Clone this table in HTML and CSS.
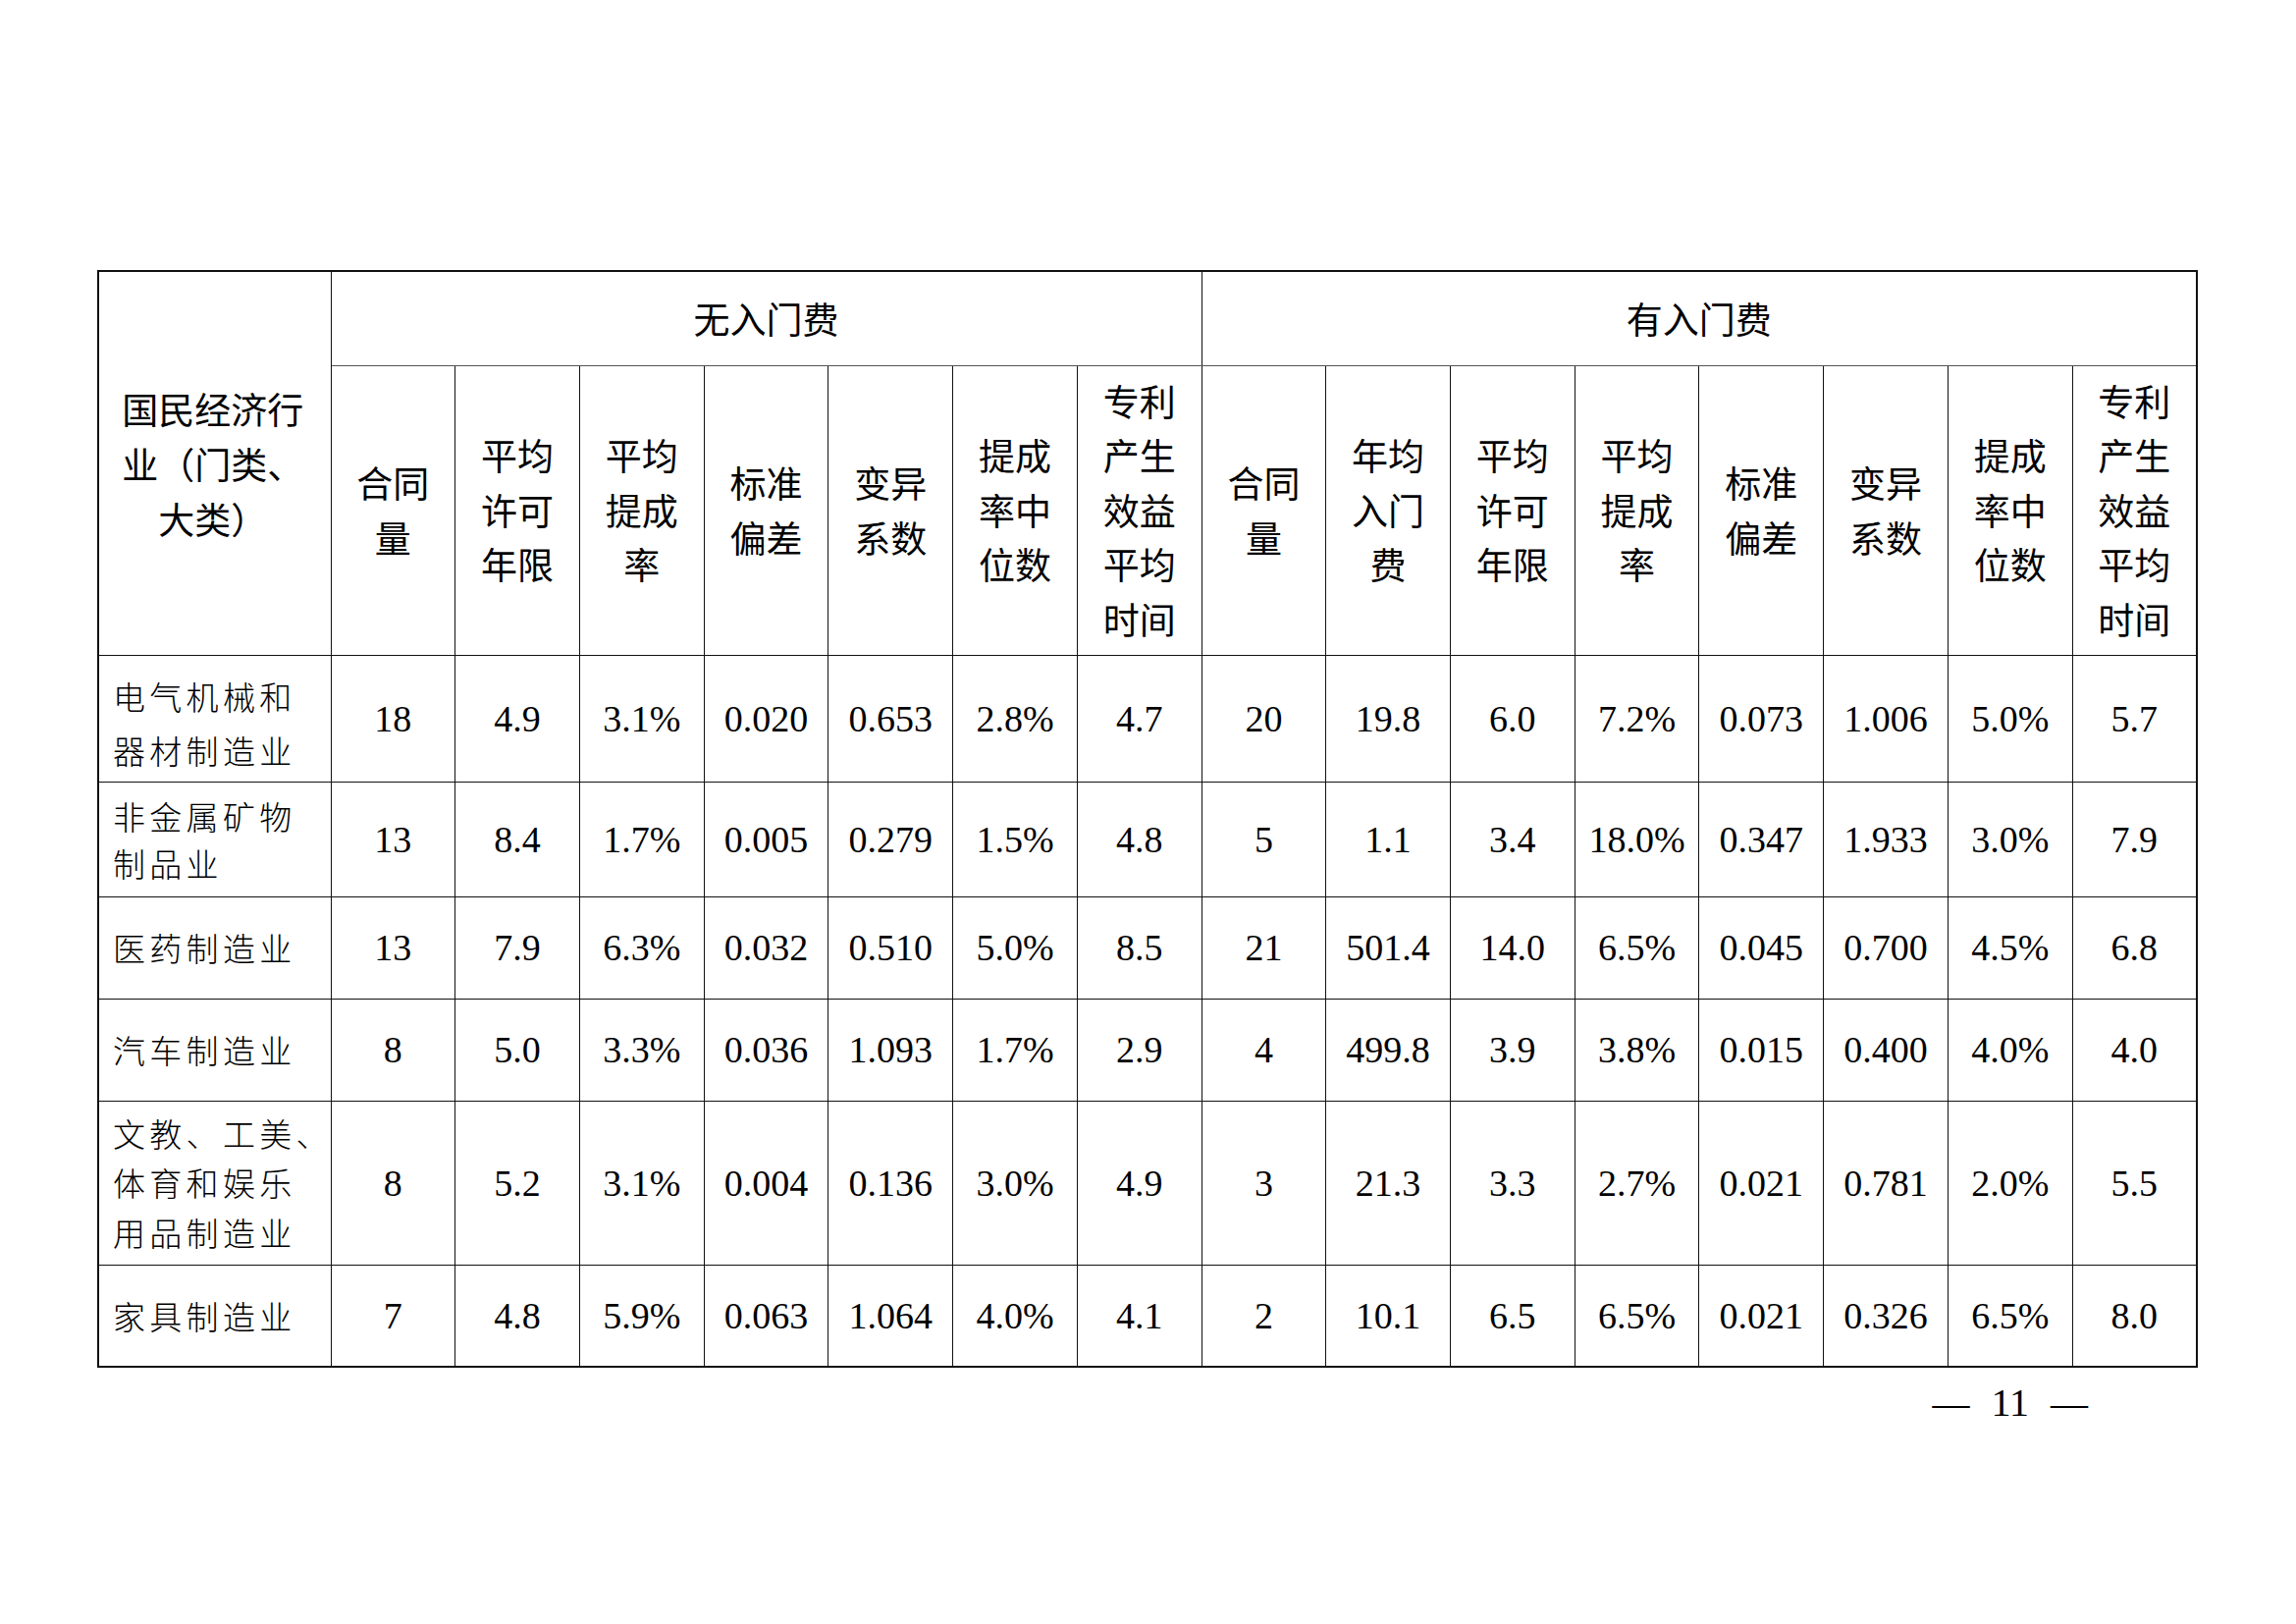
FILE: index.html
```html
<!DOCTYPE html>
<html lang="zh-CN">
<head>
<meta charset="utf-8">
<title>国民经济行业入门费统计</title>
<link rel="stylesheet" href="styles.css">
</head>
<body>
<div class="page">
  <table class="stats">
    <colgroup>
      <col class="col-name">
      <col><col><col><col><col><col><col>
      <col><col><col><col><col><col><col><col>
    </colgroup>
    <thead>
      <tr class="h-group">
        <th class="head-name" rowspan="2">国民经济行<br>业（门类、<br>大类）</th>
        <th class="group" colspan="7">无入门费</th>
        <th class="group" colspan="8">有入门费</th>
      </tr>
      <tr class="h-sub">
        <th>合同<br>量</th>
        <th>平均<br>许可<br>年限</th>
        <th>平均<br>提成<br>率</th>
        <th>标准<br>偏差</th>
        <th>变异<br>系数</th>
        <th>提成<br>率中<br>位数</th>
        <th>专利<br>产生<br>效益<br>平均<br>时间</th>
        <th>合同<br>量</th>
        <th>年均<br>入门<br>费</th>
        <th>平均<br>许可<br>年限</th>
        <th>平均<br>提成<br>率</th>
        <th>标准<br>偏差</th>
        <th>变异<br>系数</th>
        <th>提成<br>率中<br>位数</th>
        <th>专利<br>产生<br>效益<br>平均<br>时间</th>
      </tr>
    </thead>
    <tbody>
      <tr class="r1">
        <td class="name lh55">电气机械和<br>器材制造业</td>
        <td>18</td><td>4.9</td><td>3.1%</td><td>0.020</td><td>0.653</td><td>2.8%</td><td>4.7</td>
        <td>20</td><td>19.8</td><td>6.0</td><td>7.2%</td><td>0.073</td><td>1.006</td><td>5.0%</td><td>5.7</td>
      </tr>
      <tr class="r2">
        <td class="name lh48">非金属矿物<br>制品业</td>
        <td>13</td><td>8.4</td><td>1.7%</td><td>0.005</td><td>0.279</td><td>1.5%</td><td>4.8</td>
        <td>5</td><td>1.1</td><td>3.4</td><td>18.0%</td><td>0.347</td><td>1.933</td><td>3.0%</td><td>7.9</td>
      </tr>
      <tr class="r3">
        <td class="name">医药制造业</td>
        <td>13</td><td>7.9</td><td>6.3%</td><td>0.032</td><td>0.510</td><td>5.0%</td><td>8.5</td>
        <td>21</td><td>501.4</td><td>14.0</td><td>6.5%</td><td>0.045</td><td>0.700</td><td>4.5%</td><td>6.8</td>
      </tr>
      <tr class="r4">
        <td class="name">汽车制造业</td>
        <td>8</td><td>5.0</td><td>3.3%</td><td>0.036</td><td>1.093</td><td>1.7%</td><td>2.9</td>
        <td>4</td><td>499.8</td><td>3.9</td><td>3.8%</td><td>0.015</td><td>0.400</td><td>4.0%</td><td>4.0</td>
      </tr>
      <tr class="r5">
        <td class="name lh50">文教、工美、<br>体育和娱乐<br>用品制造业</td>
        <td>8</td><td>5.2</td><td>3.1%</td><td>0.004</td><td>0.136</td><td>3.0%</td><td>4.9</td>
        <td>3</td><td>21.3</td><td>3.3</td><td>2.7%</td><td>0.021</td><td>0.781</td><td>2.0%</td><td>5.5</td>
      </tr>
      <tr class="r6">
        <td class="name">家具制造业</td>
        <td>7</td><td>4.8</td><td>5.9%</td><td>0.063</td><td>1.064</td><td>4.0%</td><td>4.1</td>
        <td>2</td><td>10.1</td><td>6.5</td><td>6.5%</td><td>0.021</td><td>0.326</td><td>6.5%</td><td>8.0</td>
      </tr>
    </tbody>
  </table>
  <div class="folio">
    <span class="dash">—</span><span class="num">11</span><span class="dash">—</span>
  </div>
</div>
</body>
</html>
```

FILE: styles.css
```css
html, body {
  margin: 0;
  padding: 0;
  background: #ffffff;
}

body {
  color: #000000;
  font-family: "Liberation Serif", "Times New Roman", "Noto Sans CJK SC", serif;
}

.page {
  width: 2339px;
  height: 1654px;
  box-sizing: border-box;
  padding: 275px 0 0 99px;
}

.stats {
  width: 2140px;
  table-layout: fixed;
  border-collapse: collapse;
  border: 2px solid #111111;
}

.col-name {
  width: 237px;
}

.stats th,
.stats td {
  border: 1px solid #111111;
  padding: 0;
  text-align: center;
  vertical-align: middle;
}

.stats th {
  font-family: "Noto Sans CJK SC", "Noto Sans", sans-serif;
  font-weight: 400;
  font-size: 37px;
  line-height: 55.5px;
}

.stats .head-name {
  line-height: 56px;
  padding-right: 4px;
}

.h-group {
  height: 96px;
}

.h-group .group {
  border-bottom-color: #555555;
}

.h-sub {
  height: 295px;
}

.stats td {
  font-size: 38px;
  line-height: 44px;
  white-space: nowrap;
}

.stats td.name {
  font-family: "Noto Sans CJK SC", "Noto Sans", sans-serif;
  font-weight: 300;
  font-size: 33px;
  letter-spacing: 4.3px;
  text-align: left;
  padding-left: 14px;
  line-height: 44px;
  overflow: visible;
}

.stats td.lh55 {
  line-height: 55px;
  padding-top: 10px;
}

.stats td.lh48 {
  line-height: 48px;
}

.stats td.lh50 {
  line-height: 50.5px;
}

.r1 { height: 129px; }
.r2 { height: 117px; }
.r3 { height: 104px; }
.r4 { height: 104px; }
.r5 { height: 167px; }
.r6 { height: 104px; }

.folio {
  width: 2140px;
  display: flex;
  justify-content: flex-end;
  align-items: center;
  gap: 22px;
  box-sizing: border-box;
  padding-right: 112px;
  margin-top: 16px;
  font-size: 40px;
  line-height: 40px;
}

.folio .dash {
  display: inline-block;
  font-size: 38px;
}
```
